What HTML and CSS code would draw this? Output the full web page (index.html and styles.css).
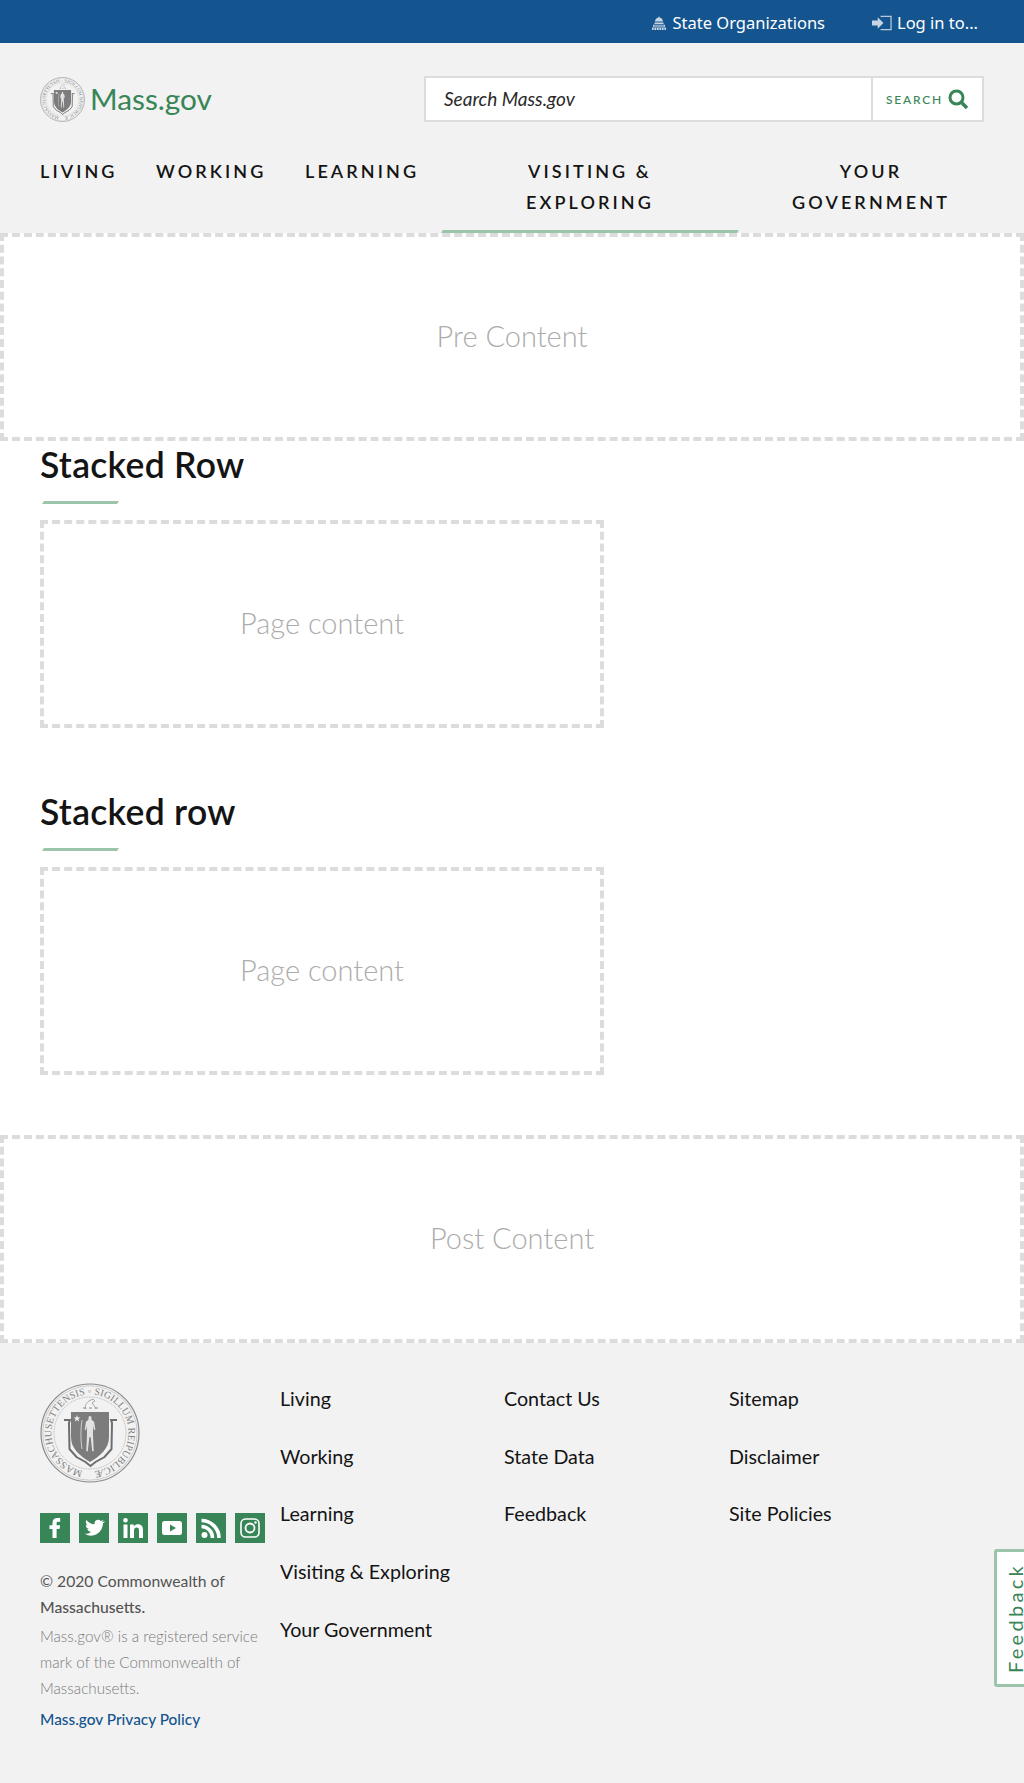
FILE: index.html
```html
<!DOCTYPE html>
<html lang="en">
<head>
<meta charset="utf-8">
<title>Mass.gov</title>
<link rel="stylesheet" href="styles.css">
</head>
<body>
<svg class="defs" width="0" height="0" aria-hidden="true">
  <defs>
    <g id="seal">
      <path id="sealArc" d="M50 88.500a38.500 38.500 0 1 1 0-77a38.500 38.500 0 1 1 0 77" fill="none"/>
      <circle cx="50" cy="50" r="49" fill="none" stroke="#8a8a8a" stroke-width="1.200"/>
      <circle cx="50" cy="50" r="47.200" fill="none" stroke="#b0b0b0" stroke-width=".6"/>
      <circle cx="50" cy="50" r="36" fill="none" stroke="#a8a8a8" stroke-width=".8" stroke-dasharray="1 .7"/>
      <text class="seal-text"><textPath href="#sealArc" startOffset="3%" textLength="230">MASSACHUSETTENSIS  ◦  SIGILLUM  REIPUBLICÆ</textPath></text>
      <path d="M31 29H69V54C69 66 60 73 50 79C40 73 31 66 31 54Z" fill="#7c7c7c"/>
      <path d="M24 37h6l-1 3 .5 26 7 8 9 5 5 4 5-4 9-5 7-8 .5-26-1-3h6" fill="none" stroke="#6e6e6e" stroke-width="2"/>
      <path transform="translate(7.500 0) scale(.85 1)" d="M50 33a1.800 1.800 0 0 1 1.800 1.800v2l3 2 1.500 8-1.200.5-1.300-4-.3 8 .9 17h-1.800l-1.800-14h-1.600l-1.800 14h-1.800l.9-17-.3-8-1.300 4-1.200-.5 1.500-8 3-2v-2A1.800 1.800 0 0 1 50 33z" fill="#e2e2e2"/>
      <path d="M42 37c-1.500 9-1.500 20 0 29" fill="none" stroke="#e2e2e2" stroke-width=".8"/>
      <path d="M37 32l.9 2.400h2.500l-2 1.500.8 2.500-2.200-1.500-2.200 1.500.8-2.500-2-1.500h2.500z" fill="#f0f0f0"/>
      <path d="M46 26c-1.500-3 0-6 3-8l4-2 2 2-3 2 3 4 1 2" fill="none" stroke="#a8a8a8" stroke-width="1"/>
      <path d="M43 25h3M49 25h3M55 25h3" stroke="#8a8a8a" stroke-width="1.200"/>
    </g>
  </defs>
</svg>

<header class="site-header">
  <div class="utility-bar">
    <a class="utility-link" href="#">
      <svg class="utility-icon" viewBox="0 0 16 16" width="16" height="16"><path d="M8 1l.6 1.600C10.800 3 11.800 4.600 12 6.500H4C4.200 4.600 5.200 3 7.400 2.600zM3.500 7.500h9V9h-9zM2 9.800h12v2H2zM1 12.600h14V15H1z" fill="#c6d4e3"/><path d="M4 10v1.700M6 10v1.700M8 10v1.700M10 10v1.700M12 10v1.700M3 13v2M5.500 13v2M8 13v2M10.500 13v2M13 13v2" stroke="#14558f" stroke-width=".7"/></svg>
      State Organizations
    </a>
    <a class="utility-link" href="#">
      <svg class="utility-icon" viewBox="0 0 21 16" width="20" height="16"><path d="M0 5.500h6V2l6 6-6 6v-3.500H0z" fill="#c6d4e3"/><path d="M9 1h11v14H9" fill="none" stroke="#b9cadd" stroke-width="1.300"/></svg>
      Log in to...
    </a>
  </div>

  <div class="brand-row">
    <a class="logo" href="#">
      <svg class="logo-seal" viewBox="0 0 100 100" width="45" height="45"><use href="#seal"/></svg>
      <span class="logo-text">Mass.gov</span>
    </a>
    <form class="search">
      <span class="search-input">Search Mass.gov</span>
      <span class="search-button">
        <span class="search-label">SEARCH</span>
        <svg viewBox="0 0 21 21" width="21" height="21"><circle cx="8.500" cy="8.500" r="6.500" fill="none" stroke="#388557" stroke-width="3"/><path d="M13 13l6 6" stroke="#388557" stroke-width="3.600"/></svg>
      </span>
    </form>
  </div>

  <nav class="main-nav">
    <a class="nav-item nav-living" href="#">LIVING</a>
    <a class="nav-item nav-working" href="#">WORKING</a>
    <a class="nav-item nav-learning" href="#">LEARNING</a>
    <a class="nav-item nav-visiting active" href="#">VISITING &amp; EXPLORING</a>
    <a class="nav-item nav-gov" href="#">YOUR GOVERNMENT</a>
  </nav>
</header>

<main>
  <div class="placeholder full pre">Pre Content</div>

  <section class="stacked first">
    <h2 class="stacked-title">Stacked Row</h2>
    <div class="title-rule"></div>
    <div class="placeholder page">Page content</div>
  </section>

  <section class="stacked second">
    <h2 class="stacked-title">Stacked row</h2>
    <div class="title-rule"></div>
    <div class="placeholder page">Page content</div>
  </section>

  <div class="placeholder full post">Post Content</div>
</main>

<footer class="site-footer">
  <div class="footer-about">
    <svg class="footer-seal" viewBox="0 0 100 100" width="100" height="100"><use href="#seal"/></svg>
    <ul class="social">
      <li><svg viewBox="0 0 30 30"><rect width="30" height="30" fill="#388557"/><path d="M12.500 25V16H9.500v-3.800h3V10c0-3.400 1.800-5 4.700-5h3v3.800h-2c-1.300 0-1.600.6-1.600 1.600v1.800h3.500l-.5 3.800h-3V25z" fill="#fff"/></svg></li>
      <li><svg viewBox="0 0 30 30"><rect width="30" height="30" fill="#388557"/><path d="M25 8.500c-.8.400-1.500.6-2.400.7.900-.5 1.500-1.300 1.800-2.300-.8.500-1.700.8-2.600 1-1.800-1.900-5-1.300-6 1-.3.800-.3 1.500-.1 2.300-3.400-.2-6.300-1.800-8.300-4.300-1.100 1.900-.5 4.300 1.300 5.500-.7 0-1.300-.2-1.900-.5 0 2 1.400 3.700 3.300 4.100-.6.200-1.200.2-1.900.1.500 1.600 2 2.800 3.800 2.800-1.800 1.400-4.100 2-6.300 1.800 6.200 3.900 14.300 1.800 17.300-5.600.6-1.500.9-3.100.8-4.700.9-.6 1.600-1.200 2.200-2z" fill="#fff"/></svg></li>
      <li><svg viewBox="0 0 30 30"><rect width="30" height="30" fill="#388557"/><path d="M5.500 11.500h4V25h-4zM7.500 5a2.300 2.300 0 1 1 0 4.600 2.300 2.300 0 0 1 0-4.600zM12 11.500h3.800v1.900c1-1.500 2.300-2.200 4.100-2.200 3.400 0 5.100 2 5.100 5.700V25h-4v-7.400c0-1.900-.7-3-2.300-3-1.700 0-2.700 1.100-2.700 3V25h-4z" fill="#fff"/></svg></li>
      <li><svg viewBox="0 0 30 30"><rect width="30" height="30" fill="#388557"/><path fill-rule="evenodd" d="M7.500 8h15A2.500 2.500 0 0 1 25 10.500v9a2.500 2.500 0 0 1-2.500 2.500h-15A2.500 2.500 0 0 1 5 19.500v-9A2.500 2.500 0 0 1 7.500 8zM13 11.500v7l6-3.500z" fill="#fff"/></svg></li>
      <li><svg viewBox="0 0 30 30"><rect width="30" height="30" fill="#388557"/><circle cx="8.500" cy="22" r="3" fill="#fff"/><path d="M5.500 13.500c6 0 11 5 11 11.500M5.500 7.500c9.500 0 17.500 7.800 17.500 17.500" fill="none" stroke="#fff" stroke-width="3.600"/></svg></li>
      <li><svg viewBox="0 0 30 30"><rect width="30" height="30" fill="#388557"/><rect x="6" y="6" width="18" height="18" rx="4.500" fill="none" stroke="#fff" stroke-width="1.600"/><circle cx="15" cy="15" r="4.500" fill="none" stroke="#fff" stroke-width="1.800"/><circle cx="20.500" cy="9.500" r="1.200" fill="#fff"/></svg></li>
    </ul>
    <p class="copyright">© 2020 Commonwealth of <strong>Massachusetts.</strong></p>
    <p class="trademark">Mass.gov® is a registered service mark of the Commonwealth of Massachusetts.</p>
    <a class="privacy" href="#">Mass.gov Privacy Policy</a>
  </div>
  <ul class="footer-col col-one">
    <li><a href="#">Living</a></li>
    <li><a href="#">Working</a></li>
    <li><a href="#">Learning</a></li>
    <li><a href="#">Visiting &amp; Exploring</a></li>
    <li><a href="#">Your Government</a></li>
  </ul>
  <ul class="footer-col col-two">
    <li><a href="#">Contact Us</a></li>
    <li><a href="#">State Data</a></li>
    <li><a href="#">Feedback</a></li>
  </ul>
  <ul class="footer-col col-three">
    <li><a href="#">Sitemap</a></li>
    <li><a href="#">Disclaimer</a></li>
    <li><a href="#">Site Policies</a></li>
  </ul>
</footer>

<a class="feedback" href="#">Feedback</a>
</body>
</html>
```

FILE: styles.css
```css
* { box-sizing: border-box; }
html, body { margin: 0; padding: 0; }
body {
  position: relative;
  width: 1024px;
  height: 1783px;
  overflow: hidden;
  background: #fff;
  color: #141414;
  font-family: "Noto Sans", sans-serif;
}
a { color: inherit; text-decoration: none; }
ul { margin: 0; padding: 0; list-style: none; }
.defs { position: absolute; }
.seal-text { font-family: "Liberation Serif", serif; font-size: 10px; fill: #808080; }

.site-header { background: #f2f2f2; height: 233px; }
.utility-bar {
  display: flex;
  justify-content: flex-end;
  align-items: center;
  gap: 47px;
  height: 43px;
  padding-right: 46px;
  background: #14558f;
}
.utility-link {
  display: flex;
  align-items: center;
  gap: 5px;
  color: #fff;
  font-family: "Noto Sans", sans-serif;
  font-size: 16.500px;
  position: relative;
  top: 1px;
}

.brand-row {
  display: flex;
  justify-content: space-between;
  align-items: center;
  height: 46px;
  margin-top: 33px;
  padding: 0 40px;
}
.logo { display: flex; align-items: center; gap: 5px; }
.logo-text {
  position: relative;
  top: -1px;
  color: #388557;
  font-family: "Lato", sans-serif;
  font-size: 29.800px;
  font-weight: 400;
}
.search {
  display: flex;
  width: 560px;
  height: 46px;
  border: 2px solid #dcdcdc;
  background: #fff;
}
.search-input {
  flex: 1;
  padding-left: 18px;
  line-height: 42px;
  font-family: "Lato", sans-serif;
  font-style: italic;
  font-weight: 400;
  font-size: 19px;
  color: #2a2a2a;
}
.search-button {
  display: flex;
  align-items: center;
  justify-content: center;
  gap: 5px;
  width: 111px;
  border-left: 2px solid #dcdcdc;
}
.search-label {
  color: #388557;
  font-family: "Lato", sans-serif;
  font-size: 12px;
  font-weight: 500;
  letter-spacing: 1.800px;
}

.main-nav { display: flex; height: 77px; margin-top: 34px; padding-left: 40px; }
.nav-item {
  display: block;
  font-family: "Lato", sans-serif;
  font-size: 18px;
  font-weight: 600;
  letter-spacing: 3.100px;
  line-height: 31px;
  text-align: center;
  color: #141414;
}
.nav-living { width: 116px; text-align: left; }
.nav-working { width: 149px; text-align: left; }
.nav-learning { width: 137px; text-align: left; }
.nav-visiting { width: 296px; padding: 0 60px; }
.nav-visiting::after {
  content: "";
  display: block;
  width: 296px;
  height: 3px;
  margin: 12px 0 0 -60px;
  background: #9bc4aa;
  transform: skewX(-30deg);
}
.nav-gov { width: 264px; padding: 0 30px; margin-left: 1px; }

.placeholder {
  display: flex;
  align-items: center;
  justify-content: center;
  height: 208px;
  padding-bottom: 4px;
  border: 4px dashed #dcdcdc;
  background: #fff;
  color: #acacac;
  font-family: "Lato", sans-serif;
  font-size: 29px;
  font-weight: 300;
}
.full { width: 1024px; }
.page { width: 564px; margin-left: 40px; }

.stacked-title {
  margin: 0;
  padding-left: 40px;
  font-family: "Lato", sans-serif;
  font-size: 35.500px;
  font-weight: 600;
  letter-spacing: .3px;
  line-height: 48px;
  color: #141414;
}
.stacked.second { padding-top: 60px; }
.title-rule {
  width: 75px;
  height: 3px;
  margin: 12px 0 16px 43px;
  background: #9bc4aa;
  transform: skewX(-30deg);
}
.post { margin-top: 60px; }

.site-footer {
  display: flex;
  height: 440px;
  padding: 40px 0 0 40px;
  background: #f2f2f2;
}
.footer-about { width: 240px; }
.footer-seal { display: block; }
.social { display: flex; gap: 9px; margin-top: 30px; }
.social li { width: 30px; height: 30px; }
.social svg { display: block; width: 30px; height: 30px; }
.copyright {
  margin: 25px 0 0;
  color: #535353;
  font-family: "Lato", sans-serif;
  font-size: 15.700px;
  line-height: 26px;
}
.copyright strong { font-weight: 500; }
.trademark {
  margin: 3px 0 0;
  width: 225px;
  color: #7a7a7a;
  font-family: "Lato", sans-serif;
  font-size: 15.200px;
  font-weight: 300;
  line-height: 26px;
}
.privacy {
  display: block;
  margin-top: 5px;
  color: #14558f;
  font-family: "Lato", sans-serif;
  font-size: 15.400px;
  font-weight: 500;
  line-height: 26px;
}
.footer-col {
  font-family: "Lato", sans-serif;
  font-size: 19.700px;
  line-height: 28px;
  color: #141414;
  display: flex;
  flex-direction: column;
  gap: 29.700px;
  padding-top: 2px;
}
.col-one { width: 224px; }
.col-two { width: 225px; }

.feedback {
  position: absolute;
  right: -12px;
  top: 1549px;
  width: 42px;
  height: 138px;
  display: flex;
  align-items: center;
  justify-content: center;
  writing-mode: vertical-rl;
  transform: rotate(180deg);
  border: 3px solid #9bc4aa;
  border-radius: 0 3px 3px 0;
  background: #fff;
  color: #388557;
  font-family: "Lato", sans-serif;
  font-size: 20px;
  letter-spacing: 3.300px;
}
```
